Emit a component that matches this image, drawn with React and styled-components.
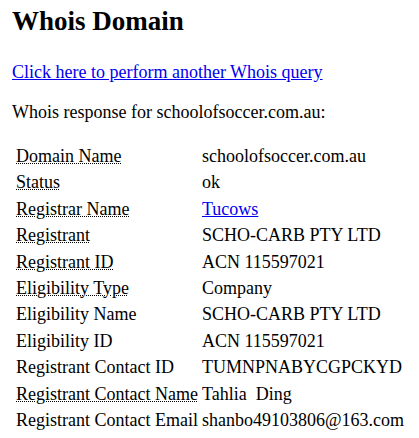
import React from "react";
import styled, { createGlobalStyle } from "styled-components";

const GlobalStyle = createGlobalStyle`
  body {
    margin: 0;
    padding: 6px 12px;
    background: #fff;
    color: #000;
    font-family: "Liberation Serif", "Times New Roman", serif;
    font-size: 18px;
    line-height: 21px;
  }
`;

const Title = styled.h1`
  font-size: 27px;
  line-height: 31px;
  font-weight: bold;
  margin: 0 0 25px;
`;

const QueryLink = styled.a`
  color: #0000ee;
  text-decoration: underline;
`;

const Para = styled.p`
  margin: 19px 0;
`;

const Table = styled.table`
  border-collapse: separate;
  border-spacing: 2px;
  margin-left: 1px;
  font-size: 18px;
`;

const Cell = styled.td`
  padding: 2px 1px 1px;
  line-height: 21.4px;
  vertical-align: top;
  white-space: nowrap;
`;

const Abbr = styled.abbr`
  text-decoration: underline dotted;
  text-decoration-thickness: 1px;
`;

const rows = [
  ["Domain Name", "schoolofsoccer.com.au", true],
  ["Status", "ok", true],
  ["Registrar Name", "Tucows", true, true],
  ["Registrant", "SCHO-CARB PTY LTD", true],
  ["Registrant ID", "ACN 115597021", true],
  ["Eligibility Type", "Company", true],
  ["Eligibility Name", "SCHO-CARB PTY LTD", false],
  ["Eligibility ID", "ACN 115597021", false],
  ["Registrant Contact ID", "TUMNPNABYCGPCKYD", false],
  ["Registrant Contact Name", "Tahlia\u00a0 Ding", true],
  ["Registrant Contact Email", "shanbo49103806@163.com", false],
];

export default function App() {
  return (
    <>
      <GlobalStyle />
      <Title>Whois Domain</Title>
      <Para>
        <QueryLink href="#">Click here to perform another Whois query</QueryLink>
      </Para>
      <Para>Whois response for schoolofsoccer.com.au:</Para>
      <Table>
        <tbody>
          {rows.map(([label, value, dotted, link]) => (
            <tr key={label}>
              <Cell>{dotted ? <Abbr title={label}>{label}</Abbr> : label}</Cell>
              <Cell>{link ? <QueryLink href="#">{value}</QueryLink> : value}</Cell>
            </tr>
          ))}
        </tbody>
      </Table>
    </>
  );
}
